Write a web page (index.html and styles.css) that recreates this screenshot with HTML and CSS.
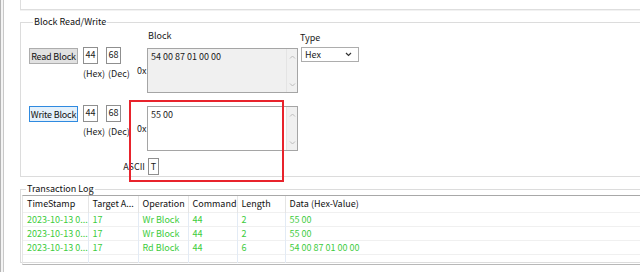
FILE: index.html
```html
<!DOCTYPE html>
<html lang="en">
  <head>
    <meta charset="UTF-8" />
    <title>Block Read/Write</title>
    <link rel="stylesheet" href="styles.css">
  </head>
  <body>
    <div class="window">
      <div class="edge"></div>
      <div class="main">
        <div class="top-panel"></div>

        <fieldset class="group rw">
          <legend>Block Read/Write</legend>
          <div class="rw-head">
            <span class="head-block">Block</span>
            <span class="head-type">Type</span>
          </div>

          <div class="rw-row">
            <div class="ctrls">
              <div class="ctrl-line">
                <button class="btn">Read Block</button>
                <span class="num">44</span>
                <span class="num">68</span>
              </div>
              <div class="units"><span>(Hex)</span><span>(Dec)</span></div>
            </div>
            <div class="prefix">0x</div>
            <div class="textbox readonly">
              <div class="tb-text">54 00 87 01 00 00</div>
              <div class="tb-scroll">
                <svg width="7" height="4" viewBox="0 0 7 4"><path d="M1 3.5 L3.5 1 L6 3.5" fill="none" stroke="#bcbcbc"/></svg>
                <svg width="7" height="4" viewBox="0 0 7 4"><path d="M1 0.5 L3.5 3 L6 0.5" fill="none" stroke="#bcbcbc"/></svg>
              </div>
            </div>
            <div class="select">
              <span>Hex</span>
              <svg width="7" height="5" viewBox="0 0 7 5"><path d="M1 1 L3.5 3.5 L6 1" fill="none" stroke="#333" stroke-width="1.2"/></svg>
            </div>
          </div>

          <div class="rw-row write">
            <div class="ctrls">
              <div class="ctrl-line">
                <button class="btn focused">Write Block</button>
                <span class="num">44</span>
                <span class="num">68</span>
              </div>
              <div class="units"><span>(Hex)</span><span>(Dec)</span></div>
            </div>
            <div class="prefix">0x</div>
            <div class="textbox">
              <div class="tb-text">55 00</div>
              <div class="tb-scroll">
                <svg width="7" height="4" viewBox="0 0 7 4"><path d="M1 3.5 L3.5 1 L6 3.5" fill="none" stroke="#bcbcbc"/></svg>
                <svg width="7" height="4" viewBox="0 0 7 4"><path d="M1 0.5 L3.5 3 L6 0.5" fill="none" stroke="#bcbcbc"/></svg>
              </div>
            </div>
          </div>

          <div class="ascii-row">
            <span class="ascii-label">ASCII</span>
            <span class="ascii-box">T</span>
          </div>

          <div class="highlight"></div>
        </fieldset>

        <fieldset class="group log">
          <legend>Transaction Log</legend>
          <div class="listview">
            <table>
              <colgroup>
                <col style="width:65px"><col style="width:50px"><col style="width:50px">
                <col style="width:49px"><col style="width:48px"><col>
              </colgroup>
              <thead>
                <tr><th>TimeStamp</th><th>Target A...</th><th>Operation</th><th>Command</th><th>Length</th><th>Data (Hex-Value)</th></tr>
              </thead>
              <tbody>
                <tr><td>2023-10-13 0...</td><td>17</td><td>Wr Block</td><td>44</td><td>2</td><td>55 00</td></tr>
                <tr><td>2023-10-13 0...</td><td>17</td><td>Wr Block</td><td>44</td><td>2</td><td>55 00</td></tr>
                <tr><td>2023-10-13 0...</td><td>17</td><td>Rd Block</td><td>44</td><td>6</td><td>54 00 87 01 00 00</td></tr>
                <tr class="empty"><td></td><td></td><td></td><td></td><td></td><td></td></tr>
              </tbody>
            </table>
          </div>
        </fieldset>
      </div>
    </div>
  </body>
</html>
```

FILE: styles.css
```css
* {
  margin: 0;
  padding: 0;
  box-sizing: border-box;
}
body {
  width: 640px;
  height: 272px;
  overflow: hidden;
  background: #fff;
  font-family: "Noto Sans CJK SC", "Noto Sans", sans-serif;
  font-size: 9px;
  color: #1a1a1a;
}
.window {
  display: flex;
  height: 272px;
}
.edge {
  width: 4px;
  flex: none;
  border-left: 1px solid #b4b4b4;
  border-right: 1px solid #c8c8c8;
  background: #f4f4f4;
}
.main {
  flex: 1;
  padding-left: 16px;
  overflow: hidden;
}
.top-panel {
  height: 10px;
  margin-right: -10px;
  border-left: 1px solid #dedede;
  border-bottom: 1px solid #dedede;
  box-shadow: 0 1px 0 #f2f2f2;
}
.group {
  position: relative;
  margin-right: -10px;
  border: 1px solid #dcdcdc;
  padding: 0 0 0 8px;
}
.group legend {
  margin-left: 4px;
  padding: 0 1px;
  line-height: 12px;
  color: #111;
}
.rw {
  margin-top: 6px;
  height: 161px;
}
.rw-head {
  display: flex;
  height: 19px;
  padding-top: 1px;
}
.head-block {
  width: 152px;
  margin-left: 119px;
}
.head-type {
  margin-top: 2px;
}
.rw-row {
  display: flex;
  align-items: flex-start;
}
.rw-row.write {
  margin-top: 12px;
}
.ctrls {
  width: 100px;
  flex: none;
}
.ctrl-line {
  display: flex;
  align-items: flex-start;
}
.btn {
  width: 49px;
  height: 16px;
  padding: 0;
  font: inherit;
  letter-spacing: -0.2px;
  line-height: 13px;
  white-space: nowrap;
  color: #111;
  background: #e1e1e1;
  border: 1px solid #adadad;
  margin-top: 1px;
}
.btn.focused {
  background: #e5f1fb;
  border-color: #2f8ae0;
}
.num {
  width: 15px;
  height: 17px;
  margin-left: 5px;
  border: 1px solid #8f8f8f;
  background: #fff;
  text-align: center;
  line-height: 14px;
}
.num + .num {
  margin-left: 8px;
}
.units {
  display: flex;
  margin-top: 4px;
  padding-left: 54px;
  line-height: 12px;
}
.units span + span {
  margin-left: 3px;
}
.prefix {
  width: 18px;
  flex: none;
  align-self: center;
  padding-left: 8px;
}
.textbox {
  display: flex;
  width: 151px;
  height: 45px;
  border: 1px solid #a5a5a5;
  background: #fff;
  margin-top: 1px;
}
.textbox.readonly {
  background: #f0f0f0;
}
.tb-text {
  flex: 1;
  padding: 1px 3px;
  line-height: 13px;
}
.tb-scroll {
  width: 11px;
  display: flex;
  flex-direction: column;
  justify-content: space-between;
  align-items: center;
  padding: 6px 0 5px;
  background: #f0f0f0;
  border-left: 1px solid #e4e4e4;
}
.select {
  display: flex;
  align-items: center;
  justify-content: space-between;
  width: 58px;
  height: 15px;
  margin-left: 3px;
  padding: 0 6px 0 3px;
  border: 1px solid #adadad;
  background: #fff;
}
.ascii-row {
  display: flex;
  align-items: center;
  margin-top: 7px;
}
.ascii-label {
  width: 119px;
  text-align: right;
  padding-right: 3px;
}
.ascii-box {
  width: 11px;
  height: 17px;
  border: 1px solid #8f8f8f;
  text-align: center;
  line-height: 15px;
}
.highlight {
  position: absolute;
  left: 108px;
  top: 72px;
  width: 155px;
  height: 82px;
  border: 2px solid #e8232c;
}
.log {
  margin-top: 6px;
  height: 80px;
  padding: 0 0 0 1px;
}
.listview {
  border-top: 1px solid #a8a8a8;
  border-left: 1px solid #e6e6e6;
  border-bottom: 1px solid #b8b8b8;
  height: 70px;
  overflow: hidden;
}
table {
  width: 100%;
  border-collapse: collapse;
  table-layout: fixed;
}
th, td {
  text-align: left;
  font-weight: normal;
  padding: 0 4px;
  white-space: nowrap;
  overflow: hidden;
}
th {
  height: 16px;
  color: #111;
  border-right: 1px solid #e5e5e5;
}
td {
  height: 14px;
  color: #3ccc3c;
  border-top: 1px solid #f0f0f0;
  border-right: 1px solid #e3ebf5;
}
tr.empty td {
  height: 9px;
}
```
